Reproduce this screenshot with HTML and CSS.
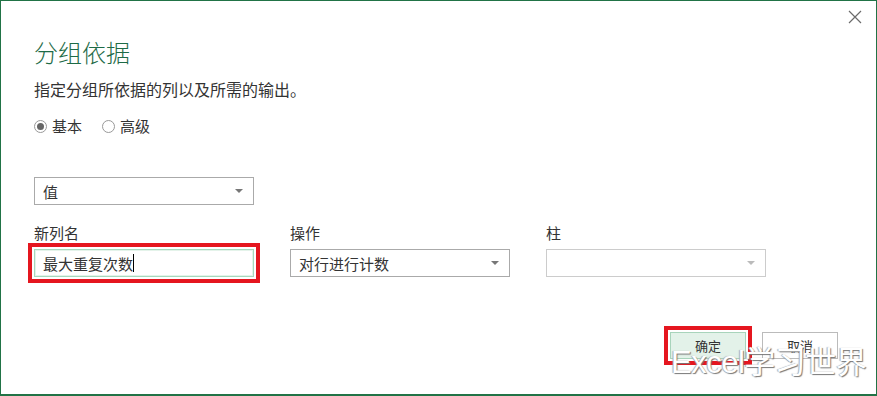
FILE: index.html
```html
<!DOCTYPE html>
<html lang="zh-CN">
<head>
    <meta charset="UTF-8">
    <meta name="viewport" content="width=device-width, initial-scale=1.0">
    <title>分组依据</title>
    <link rel="stylesheet" href="styles.css">
</head>
<body>
    <div class="dialogo">
        <button class="cerrar" aria-label="关闭">
            <svg width="14" height="14" viewBox="0 0 14 14"><path d="M1 1 L13 13 M13 1 L1 13" stroke="#6b6b6b" stroke-width="1.2" fill="none"/></svg>
        </button>

        <h1 class="titulo">分组依据</h1>
        <p class="descripcion">指定分组所依据的列以及所需的输出。</p>

        <div class="radios">
            <label class="radio"><span class="punto marcado"></span>基本</label>
            <label class="radio"><span class="punto"></span>高级</label>
        </div>

        <div class="select ancho">
            <span>值</span>
            <span class="flecha"></span>
        </div>

        <div class="campos">
            <div class="campo">
                <label>新列名</label>
                <div class="entrada resaltado">最大重复次数<span class="cursor"></span></div>
            </div>
            <div class="campo">
                <label>操作</label>
                <div class="select">
                    <span>对行进行计数</span>
                    <span class="flecha"></span>
                </div>
            </div>
            <div class="campo">
                <label>柱</label>
                <div class="select inactivo">
                    <span></span>
                    <span class="flecha"></span>
                </div>
            </div>
        </div>

        <div class="botones">
            <button class="boton principal resaltado">确定</button>
            <button class="boton">取消</button>
        </div>

        <div class="marca">Excel学习世界</div>
    </div>
</body>
</html>
```

FILE: styles.css
```css
* {
    box-sizing: border-box;
    padding: 0;
    margin: 0;
}

html,
body {
    width: 100%;
    height: 100%;
}

body {
    font-family: "Noto Sans CJK SC", "Noto Sans", sans-serif;
    color: #333;
    background: #fff;
}

.dialogo {
    position: relative;
    height: 396px;
    border: 1px solid #217346;
    border-bottom-width: 2px;
    padding: 0 0 0 33px;
}

.cerrar {
    position: absolute;
    top: 9px;
    right: 14px;
    border: none;
    background: none;
    cursor: pointer;
    line-height: 0;
}

.titulo {
    font-size: 24px;
    font-weight: 300;
    color: #1e6b47;
    line-height: 32px;
    padding-top: 35px;
}

.descripcion {
    font-size: 16px;
    line-height: 20px;
    margin-top: 11px;
}

.radios {
    display: flex;
    gap: 20px;
    margin-top: 17px;
    font-size: 15px;
    line-height: 20px;
}

.radio {
    display: flex;
    align-items: center;
    gap: 5px;
}

.punto {
    width: 13px;
    height: 13px;
    border: 1px solid #999;
    border-radius: 50%;
    display: flex;
    align-items: center;
    justify-content: center;
}

.punto.marcado::after {
    content: "";
    width: 7px;
    height: 7px;
    border-radius: 50%;
    background: #666;
}

.select {
    height: 28px;
    border: 1px solid #aaa;
    display: flex;
    align-items: center;
    justify-content: space-between;
    padding: 0 10px 0 8px;
    font-size: 15px;
    width: 220px;
}

.select.ancho {
    margin-top: 41px;
}

.select.inactivo {
    border-color: #ccc;
}

.flecha {
    width: 0;
    height: 0;
    border-left: 4px solid transparent;
    border-right: 4px solid transparent;
    border-top: 4px solid #777;
}

.inactivo .flecha {
    border-top-color: #bbb;
}

.campos {
    display: grid;
    grid-template-columns: 220px 220px 220px;
    column-gap: 36px;
    margin-top: 18px;
}

.campo label {
    display: block;
    font-size: 15px;
    line-height: 20px;
    margin-bottom: 6px;
}

.entrada {
    height: 28px;
    border: 1px solid #a6d8bd;
    box-shadow: inset 0 0 0 1px #e4f3ea;
    padding: 0 8px;
    font-size: 15px;
    display: flex;
    align-items: center;
    width: 220px;
}

.cursor {
    width: 1px;
    height: 18px;
    background: #000;
}

.resaltado {
    outline: 4px solid #e5161f;
    outline-offset: 2px;
}

.botones {
    display: flex;
    justify-content: flex-end;
    gap: 16px;
    margin-top: 55px;
    padding-right: 38px;
}

.boton {
    width: 76px;
    height: 27px;
    border: 1px solid #bbb;
    background: #fff;
    font-family: inherit;
    font-size: 13px;
    color: #333;
    cursor: pointer;
}

.boton.principal {
    background: #e3f2e9;
    border-color: #a8d4bb;
}

.marca {
    position: absolute;
    left: 670px;
    top: 342px;
    font-family: "Liberation Sans", "Noto Sans CJK SC", sans-serif;
    font-size: 31px;
    line-height: 40px;
    color: #fff;
    text-shadow: 1px 1px 1px #777, -1px 0 1px #aaa;
    letter-spacing: -0.5px;
}
```
